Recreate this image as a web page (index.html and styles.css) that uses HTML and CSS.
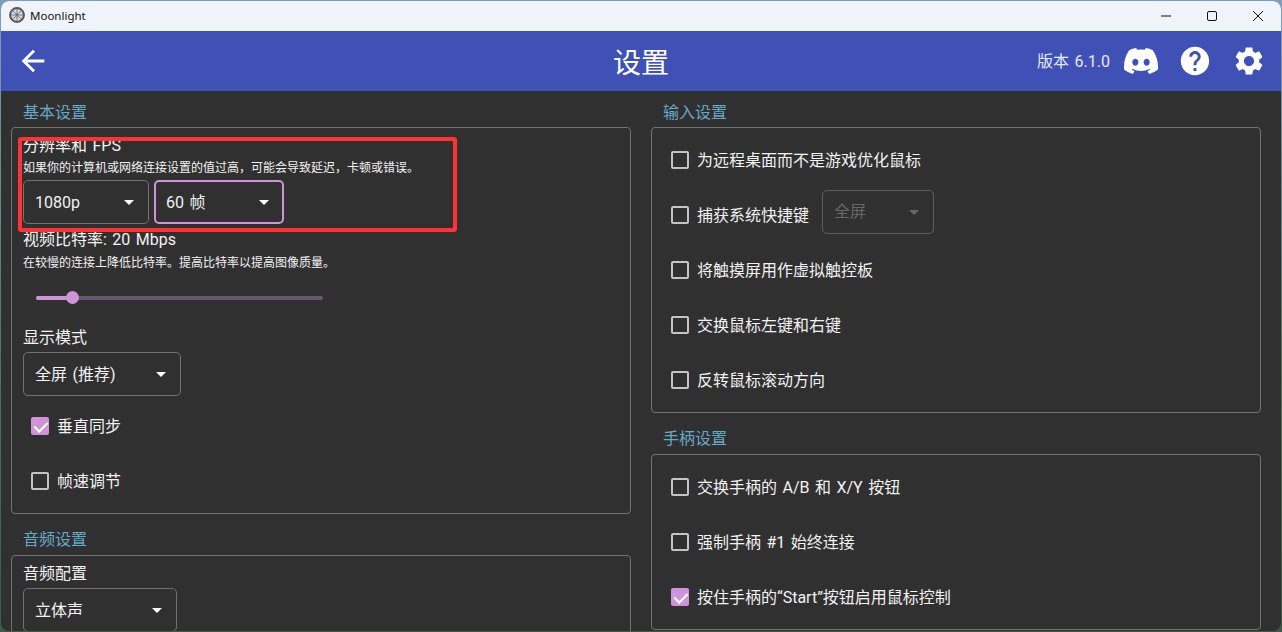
FILE: index.html
```html
<!DOCTYPE html>
<html lang="zh-CN">
<head>
    <meta charset="UTF-8">
    <meta name="viewport" content="width=device-width, initial-scale=1.0">
    <title>Moonlight</title>
    <link rel="stylesheet" href="styles.css">
</head>
<body>
    <div class="window">
        <div class="titlebar">
            <svg class="app-icon" viewBox="0 0 16 16">
                <circle cx="8" cy="8" r="6.9" fill="#d4d6d8" stroke="#55585a" stroke-width="2"/>
                <path d="M8 2v12M2 8h12M3.8 3.8l8.4 8.4M12.2 3.8l-8.4 8.4" stroke="#6c6f71" stroke-width="0.8"/>
                <circle cx="8" cy="8" r="1.4" fill="#6c6f71"/>
            </svg>
            <span class="app-name">Moonlight</span>
            <div class="window-controls">
                <svg viewBox="0 0 46 30"><path d="M18 15h10" stroke="#111" stroke-width="1"/></svg>
                <svg viewBox="0 0 46 30"><rect x="18.5" y="10.5" width="9" height="9" rx="1.5" fill="none" stroke="#111" stroke-width="1"/></svg>
                <svg viewBox="0 0 46 30"><path d="M18 10l10 10M28 10l-10 10" stroke="#111" stroke-width="1"/></svg>
            </div>
        </div>

        <div class="toolbar">
            <div class="toolbar-left">
                <svg class="tool-icon" viewBox="0 0 24 24"><path fill="#fff" d="M20 11H7.83l5.59-5.59L12 4l-8 8 8 8 1.41-1.41L7.83 13H20v-2z"/></svg>
            </div>
            <div class="toolbar-title">设置</div>
            <div class="toolbar-right">
                <span class="version">版本 6.1.0</span>
                <svg class="tool-icon" viewBox="0 0 24 24"><path fill="#fff" d="M20.317 4.37a19.791 19.791 0 0 0-4.885-1.515.074.074 0 0 0-.079.037c-.21.375-.444.864-.608 1.25a18.27 18.27 0 0 0-5.487 0 12.64 12.64 0 0 0-.617-1.25.077.077 0 0 0-.079-.037A19.736 19.736 0 0 0 3.677 4.37a.07.07 0 0 0-.032.027C.533 9.046-.32 13.58.099 18.057a.082.082 0 0 0 .031.057 19.9 19.9 0 0 0 5.993 3.03.078.078 0 0 0 .084-.028 14.09 14.09 0 0 0 1.226-1.994.076.076 0 0 0-.041-.106 13.107 13.107 0 0 1-1.872-.892.077.077 0 0 1-.008-.128 10.2 10.2 0 0 0 .372-.292.074.074 0 0 1 .077-.01c3.928 1.793 8.18 1.793 12.062 0a.074.074 0 0 1 .078.01c.12.098.246.198.373.292a.077.077 0 0 1-.006.127 12.299 12.299 0 0 1-1.873.892.077.077 0 0 0-.041.107c.36.698.772 1.362 1.225 1.993a.076.076 0 0 0 .084.028 19.839 19.839 0 0 0 6.002-3.03.077.077 0 0 0 .032-.054c.5-5.177-.838-9.674-3.549-13.66a.061.061 0 0 0-.031-.03zM8.02 15.33c-1.183 0-2.157-1.085-2.157-2.419 0-1.333.956-2.419 2.157-2.419 1.21 0 2.176 1.096 2.157 2.42 0 1.333-.956 2.418-2.157 2.418zm7.975 0c-1.183 0-2.157-1.085-2.157-2.419 0-1.333.955-2.419 2.157-2.419 1.21 0 2.176 1.096 2.157 2.42 0 1.333-.946 2.418-2.157 2.418z"/></svg>
                <svg class="tool-icon" viewBox="0 0 24 24"><path fill="#fff" d="M12 2C6.48 2 2 6.48 2 12s4.48 10 10 10 10-4.48 10-10S17.52 2 12 2zm1 17h-2v-2h2v2zm2.07-7.75l-.9.92C13.45 12.9 13 13.5 13 15h-2v-.5c0-1.1.45-2.1 1.17-2.83l1.24-1.26c.37-.36.59-.86.59-1.41 0-1.1-.9-2-2-2s-2 .9-2 2H8c0-2.21 1.79-4 4-4s4 1.79 4 4c0 .88-.36 1.68-.93 2.25z"/></svg>
                <svg class="tool-icon" viewBox="0 0 24 24"><path fill="#fff" d="M19.14 12.94c.04-.3.06-.61.06-.94 0-.32-.02-.64-.07-.94l2.03-1.58c.18-.14.23-.41.12-.61l-1.92-3.32c-.12-.22-.37-.29-.59-.22l-2.39.96c-.5-.38-1.03-.7-1.62-.94l-.36-2.54c-.04-.24-.24-.41-.48-.41h-3.84c-.24 0-.43.17-.47.41l-.36 2.54c-.59.24-1.13.57-1.62.94l-2.39-.96c-.22-.08-.47 0-.59.22L2.74 8.87c-.12.21-.08.47.12.61l2.03 1.58c-.05.3-.09.63-.09.94s.02.64.07.94l-2.03 1.58c-.18.14-.23.41-.12.61l1.92 3.32c.12.22.37.29.59.22l2.39-.96c.5.38 1.03.7 1.62.94l.36 2.54c.05.24.24.41.48.41h3.84c.24 0 .44-.17.47-.41l.36-2.54c.59-.24 1.13-.56 1.62-.94l2.39.96c.22.08.47 0 .59-.22l1.92-3.32c.12-.22.07-.47-.12-.61l-2.01-1.58zM12 15.6c-1.98 0-3.6-1.62-3.6-3.6s1.62-3.6 3.6-3.6 3.6 1.62 3.6 3.6-1.62 3.6-3.6 3.6z"/></svg>
            </div>
        </div>

        <div class="settings">
            <div class="column">
                <div class="group-title">基本设置</div>
                <div class="group-box form-box">
                    <div class="field-label">分辨率和 FPS</div>
                    <div class="field-hint">如果你的计算机或网络连接设置的值过高，可能会导致延迟，卡顿或错误。</div>
                    <div class="select-row">
                        <div class="select select-resolution">1080p</div>
                        <div class="select select-fps focused">60 帧</div>
                    </div>

                    <div class="field-label bitrate-label">视频比特率: 20 Mbps</div>
                    <div class="field-hint">在较慢的连接上降低比特率。提高比特率以提高图像质量。</div>
                    <div class="slider">
                        <div class="slider-fill"></div>
                        <div class="slider-handle"></div>
                    </div>

                    <div class="field-label">显示模式</div>
                    <div class="select-row select-row-tight">
                        <div class="select select-display">全屏 (推荐)</div>
                    </div>

                    <div class="check-list check-list-form">
                        <div class="check-row"><span class="checkbox checked"></span>垂直同步</div>
                        <div class="check-row"><span class="checkbox"></span>帧速调节</div>
                    </div>
                </div>

                <div class="group-title group-next">音频设置</div>
                <div class="group-box form-box">
                    <div class="field-label">音频配置</div>
                    <div class="select-row select-row-tight">
                        <div class="select select-audio">立体声</div>
                    </div>
                </div>
            </div>

            <div class="column">
                <div class="group-title">输入设置</div>
                <div class="group-box">
                    <div class="check-list">
                        <div class="check-row"><span class="checkbox"></span>为远程桌面而不是游戏优化鼠标</div>
                        <div class="check-row">
                            <span class="checkbox"></span>捕获系统快捷键
                            <div class="select select-capture disabled">全屏</div>
                        </div>
                        <div class="check-row"><span class="checkbox"></span>将触摸屏用作虚拟触控板</div>
                        <div class="check-row"><span class="checkbox"></span>交换鼠标左键和右键</div>
                        <div class="check-row"><span class="checkbox"></span>反转鼠标滚动方向</div>
                    </div>
                </div>

                <div class="group-title group-next">手柄设置</div>
                <div class="group-box">
                    <div class="check-list">
                        <div class="check-row"><span class="checkbox"></span>交换手柄的 A/B 和 X/Y 按钮</div>
                        <div class="check-row"><span class="checkbox"></span>强制手柄 #1 始终连接</div>
                        <div class="check-row"><span class="checkbox checked"></span>按住手柄的“Start”按钮启用鼠标控制</div>
                    </div>
                </div>
            </div>
        </div>

        <div class="highlight"></div>
    </div>
</body>
</html>
```

FILE: styles.css
```css
* {
    box-sizing: border-box;
}

html, body {
    height: 100%;
}

body {
    margin: 0;
    overflow: hidden;
    background: linear-gradient(180deg, #7f9dbd 0%, #56705a 60%, #3c5a48 100%);
    font-family: Roboto, "Noto Sans CJK SC", sans-serif;
    font-size: 16px;
    word-spacing: 1.5px;
    color: #f2f2f2;
}

.window {
    position: relative;
    display: flex;
    flex-direction: column;
    width: 1280px;
    height: 630px;
    margin: 1px;
    border-radius: 8px;
    background-color: #303030;
    overflow: hidden;
}

/* Title bar */
.titlebar {
    display: flex;
    align-items: center;
    flex: 0 0 30px;
    background-color: #eef4f9;
    color: #111;
}

.app-icon {
    width: 16px;
    height: 16px;
    margin-left: 8px;
    margin-top: -2px;
}

.app-name {
    margin-left: 5px;
    margin-top: -1px;
    font-family: "Noto Sans", sans-serif;
    font-size: 11.5px;
}

.window-controls {
    display: flex;
    margin-left: auto;
}

.window-controls svg {
    display: block;
    width: 46px;
    height: 30px;
    margin-top: -1px;
}

/* Toolbar */
.toolbar {
    display: grid;
    grid-template-columns: 1fr auto 1fr;
    align-items: center;
    flex: 0 0 60px;
    padding: 0 15px;
    background-color: #3f51b5;
    color: #fff;
}

.tool-icon {
    display: block;
    width: 34px;
    height: 34px;
}

.toolbar-title {
    font-size: 28px;
}

.toolbar-right {
    display: flex;
    align-items: center;
    justify-content: flex-end;
    gap: 20px;
}

.version {
    margin-right: -6px;
    margin-bottom: 2px;
    color: #e6e9f6;
}

/* Settings */
.settings {
    display: grid;
    grid-template-columns: 620px 610px;
    gap: 20px;
    flex: 1;
    padding-left: 10px;
    overflow: hidden;
}

.group-title {
    height: 36px;
    padding-left: 12px;
    line-height: 44px;
    color: #66a9c9;
}

.group-next {
    height: 41px;
    line-height: 52px;
}

.group-box {
    padding: 12px 11px;
    border: 1px solid #737373;
    border-radius: 4px;
}

.form-box {
    padding-top: 8px;
}

.field-label {
    line-height: 20px;
}

.bitrate-label {
    margin-top: 6px;
    margin-bottom: 2px;
}

.field-hint {
    margin-top: 1px;
    font-size: 12px;
    line-height: 22px;
}

.select-row {
    display: flex;
    gap: 5px;
    margin-top: 1px;
}

.select-row-tight {
    margin-top: 4px;
}

.select {
    position: relative;
    height: 44px;
    padding-left: 11px;
    border: 1px solid #737373;
    border-radius: 5px;
    line-height: 44px;
}

.select::after {
    content: "";
    position: absolute;
    top: 19px;
    right: 14px;
    border-left: 5px solid transparent;
    border-right: 5px solid transparent;
    border-top: 5px solid #fff;
}

.select-resolution {
    width: 126px;
}

.select-fps {
    width: 130px;
}

.select-display {
    width: 158px;
}

.select-audio {
    width: 154px;
}

.select-capture {
    width: 112px;
    margin: 0 0 4px 13px;
    line-height: 42px;
}

.select.focused {
    border: 2px solid #ce93d8;
    padding-left: 10px;
    line-height: 42px;
}

.select.focused::after {
    top: 18px;
    right: 13px;
}

.select.disabled {
    border-color: #5e5e5e;
    color: #686868;
}

.select.disabled::after {
    border-top-color: #686868;
}

/* Slider */
.slider {
    position: relative;
    width: 287px;
    height: 4px;
    margin: 22px 0 28px 13px;
    border-radius: 2px;
    background-color: #6a566e;
}

.slider-fill {
    width: 36px;
    height: 4px;
    border-radius: 2px;
    background-color: #ce93d8;
}

.slider-handle {
    position: absolute;
    top: -5px;
    left: 30px;
    width: 13px;
    height: 13px;
    border-radius: 50%;
    background-color: #ce93d8;
}

/* Checkboxes */
.check-list {
    display: flex;
    flex-direction: column;
    gap: 15px;
    padding-left: 8px;
}

.check-list-form {
    margin-top: 10px;
}

.check-row {
    display: flex;
    align-items: center;
    height: 40px;
    padding-bottom: 2px;
}

.checkbox {
    flex: 0 0 18px;
    width: 18px;
    height: 18px;
    margin-top: 2px;
    margin-right: 8px;
    border: 2px solid #c4c4c4;
    border-radius: 2px;
}

.checkbox.checked {
    position: relative;
    border-color: #ce93d8;
    background-color: #ce93d8;
}

.checkbox.checked::after {
    content: "";
    position: absolute;
    top: 0;
    left: 4px;
    width: 6px;
    height: 11px;
    border: solid #fff;
    border-width: 0 2px 2px 0;
    transform: rotate(45deg);
}

/* Red annotation on top of the screenshot */
.highlight {
    position: absolute;
    top: 136px;
    left: 17px;
    width: 439px;
    height: 95px;
    border: 4px solid #ff3333;
    border-radius: 3px;
}
```
